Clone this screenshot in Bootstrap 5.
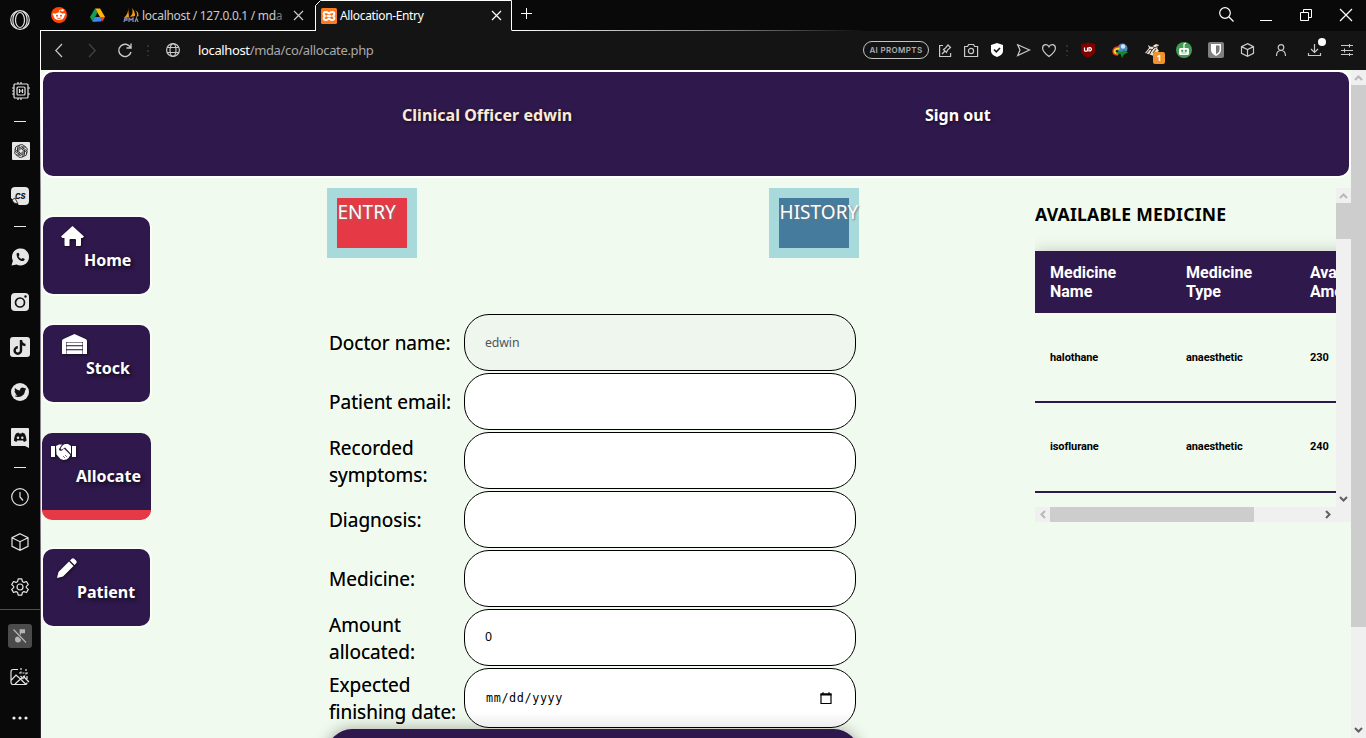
<!DOCTYPE html>
<html lang="en">
<head>
<meta charset="utf-8">
<title>Allocation-Entry</title>
<link rel="stylesheet" href="https://cdn.jsdelivr.net/npm/bootstrap@5.3.0/dist/css/bootstrap.min.css">
<style>
:root{--ink:#2f184b;--mint:#f1faee;--aqua:#a8dadc;--red:#e63946;--blue:#457b9d}
body{width:1366px;height:738px;overflow:hidden;background:#080808;font-family:"Noto Sans","Open Sans",sans-serif;color:#000}
svg{display:block;flex:none;overflow:visible}
.ln{fill:none;stroke:#c9c9c9;stroke-width:1.2}
/* launcher rail */
.rail{width:40px;background:#090909}
.slot{height:45px;display:flex;align-items:center;justify-content:center;flex:none}
.slot .ln{stroke:#e4e4e4}
.h10{height:11px}.h20{height:20px}.h30{height:30px}.h31{height:31px}.h40{height:40px}.h50{height:50px}.h52{height:52px}
.dash{width:12px;height:1px;background:#e8e8e8}
.rule{height:1px;background:#505050;flex:none}
.edge{width:1px;background:linear-gradient(#090909 0 30px,#fff 30px 100px,#8d8792 190px,#8d8792 520px,#2b2530 650px)}
.mute{width:24px;height:24px;background:#4b4b4b;border-radius:3px}
/* tabs */
.tabs{height:31px;background:#090909;font-size:12px;line-height:30px}
.tab-ico{width:38px;height:30px;padding-right:2px}
.rest{height:31px;border-bottom:1px solid #fff}
.fade-line{border-image:linear-gradient(90deg,#fff,#777 65%,#090909) 1;width:355px}
.tab-name{width:142px;white-space:nowrap;color:#c9c9c9;letter-spacing:-.3px;line-height:31px}
.tab-name i{font-style:normal;color:#777}
.tab-on{width:196px;height:31px;color:#fff;letter-spacing:-.35px;position:relative;line-height:31px}
.tab-on>.outline{position:absolute;left:0;top:0}
.tab-on>div{position:relative}
.bar{height:39px;padding-bottom:1px;background:#141414;color:#aaa;font-size:13px}
.bar b{font-weight:400;color:#fff}
.url{letter-spacing:-.36px;padding:2px 0 0 7px}
.w26{width:26px}.w32{width:32px}.w34{width:34px}.w40{width:40px}
.cell{display:flex;align-items:center;justify-content:center;flex:none}
.pill{width:66px;height:18px;border:1px solid #c4c4c4;border-radius:9px;font:600 8px/16px Inter,sans-serif;letter-spacing:.35px;color:#ababab;text-align:center;margin-right:3px}
.badge-n{position:absolute;left:17px;top:9px;width:12px;height:12px;border-radius:2px;background:#f0932b;color:#fff;font:700 9px/12px "Open Sans",sans-serif;text-align:center}
.dl-dot{position:absolute;left:20px;top:-6px;width:8px;height:8px;border-radius:50%;background:#fff}
/* document */
.doc{height:668px;background:var(--mint);overflow:hidden}
.sheet{width:1310px;padding:2px}
.top-nav{height:104px;width:1306px;border-radius:10px;background:var(--ink);box-shadow:0 0 0 2px #fff;color:#fff;font-weight:700;font-size:16px;padding-top:31px;text-shadow:1px 1px 3px #0008}
.who{margin-left:359px;width:523px;color:#faebd7;letter-spacing:.04px}
.side{width:107px;padding-top:41px}
.tile{height:77px;border-radius:10px;background:var(--ink);color:#fff;font-weight:700;font-size:16px;line-height:29px;padding-top:9px;margin-bottom:31px;box-shadow:0 0 0 2px #f9fdf8;text-shadow:2px 2px 4px #000a}
.tile svg{height:20px;filter:drop-shadow(1px 1px 1.5px #0008)}
.tile.now{height:87px;width:109px;margin:0 -1px 29px;padding-left:1px;border-bottom:10px solid var(--red);box-shadow:none}
.entry{width:532px;margin-left:177px;padding-top:12px}
.sq{width:90px;height:70px;border:10px solid var(--aqua);color:#fff;font-size:19px;line-height:28px;letter-spacing:.05px;padding-left:.5px;text-shadow:1px 1px 2px #777}
.rowf{height:59px;padding-left:2px}
.rowf label{width:135px;font-size:19px;line-height:27px;padding-top:2px;text-shadow:0 0 .6px #0009;letter-spacing:0;flex:none}
.fld{width:392px;height:57px;border:1px solid #000;border-radius:25px;background:#fff;font-size:12.3px;padding:0 20px;display:flex;align-items:center}
.fld.off{background:#eff6ee;color:#545454;letter-spacing:-.1px;padding-top:1px}
.dt{height:60px;background:linear-gradient(#fff 75%,#ececec)}
.mono{font:11.8px "DejaVu Sans Mono",monospace;letter-spacing:.6px;padding-left:1px}
.send{width:532px;height:57px;border-radius:25px;background:var(--ink);box-shadow:0 0 16px #0005}
.stock{width:316px;margin-left:176px;padding-top:12px}
.view{width:301px;height:319px;overflow:hidden;font-family:Roboto,sans-serif}
.view h1{font:700 17.6px/24px "Noto Sans",sans-serif;margin:14px 0 25px;white-space:nowrap;letter-spacing:.2px}
.med{width:420px}
.tr1{height:62px;background:var(--ink);color:#fff;font-weight:700;font-size:16px;line-height:19px;box-shadow:0 0 15px #0003;clip-path:inset(-20px 0 0 0);letter-spacing:0}
.tr2{height:90px;border-bottom:2px solid var(--ink);font-weight:700;font-size:11px;letter-spacing:-.1px;padding-top:1px}
.tr2.first{padding-top:3px}
.c1{width:136px;padding-left:15px}.c2{width:124px;padding-left:15px}.c3{width:120px;padding-left:15px}
.sb{width:15px;background:#f0f0f0}
.sb .thumb,.hs .thumb{background:#cdcdcd}
.btn15{width:15px;height:15px;flex:none}
.hs{height:15px;background:#f0f0f0}
.ar{fill:none;stroke:#606060;stroke-width:2}
.ar.dim{stroke:#b8b8b8}
</style>
</head>
<body class="d-flex m-0">
<aside class="rail d-flex flex-column">
 <div class="slot h40"><svg width="20" height="20" viewBox="0 0 20 20"><circle cx="10" cy="10" r="9.3" class="ln"/><ellipse cx="10" cy="10" rx="4.500" ry="7.500" class="ln"/><path class="ln" d="M7 1.500C1.500 5 1.500 15 7 18.500M13 1.500C18.500 5 18.500 15 13 18.500"/></svg></div>
 <div class="slot h31"></div>
 <div class="slot h40" style="padding-left:1px"><svg width="18" height="18" viewBox="0 0 18 18"><g class="ln"><rect x="2" y="2" width="14" height="14" rx="1"/><rect x="5" y="5" width="8" height="8" rx="1"/><path d="M7.500 7v4M10.500 7v4M7.500 9h3M6 0v2M9 0v2M6 16v2M9 16v2M0 6h2M0 9h2M0 12h2M16 6h2M16 12h2"/></g></svg></div>
 <div class="slot h20"><div class="dash"></div></div>
 <div class="slot h40" style="padding-left:1px"><svg width="18" height="18" viewBox="0 0 18 18"><rect width="18" height="18" rx="1" fill="#e6e6e6"/><g fill="none" stroke="#111" stroke-width=".75"><path id="petal" d="M6.900 9.500V5.200a2.700 2.700 0 0 1 4.800-1.700M6.900 6.200l3.300-1.900a2.700 2.700 0 0 1 3.700 1"/><use href="#petal" transform="rotate(60 9 9)"/><use href="#petal" transform="rotate(120 9 9)"/><use href="#petal" transform="rotate(180 9 9)"/><use href="#petal" transform="rotate(240 9 9)"/><use href="#petal" transform="rotate(300 9 9)"/></g></svg></div>
 <div class="slot h50"><svg width="18" height="18" viewBox="0 0 18 18"><path d="M4 0h10a4 4 0 0 1 4 4v10a4 4 0 0 1-4 4H8L0 11V4a4 4 0 0 1 4-4z" fill="#e6e6e6"/><path d="M1 13l3-2 3 6-4-1z" fill="#e6e6e6" stroke="#111" stroke-width=".8"/><text x="4" y="12" font-family="Inter" font-weight="800" font-style="italic" font-size="7.500" fill="#111">CS</text></svg></div>
 <div class="slot h10"><div class="dash"></div></div>
 <div class="slot h50"><svg width="18" height="18" viewBox="0 0 19 18"><path d="M.500 18L2 13A9 9 0 1 1 6 17z" fill="#e6e6e6"/><path d="M6 5l2-.5 1 2.500-1 1.200c.8 1.500 1.800 2.300 3 2.900l1.300-1.100 2.200 1.200c-.3 2-1.700 2.300-3 2C8.500 12.500 5.500 9.500 6 5z" fill="#111"/></svg></div>
 <div class="slot h40"><svg width="18" height="18" viewBox="0 0 18 18"><rect width="18" height="18" rx="4" fill="#e6e6e6"/><circle cx="9" cy="9.500" r="4.500" fill="none" stroke="#111" stroke-width="1.700"/><circle cx="14.500" cy="3.500" r="1.200" fill="#111"/></svg></div>
 <div class="slot h50"><svg width="20" height="20" viewBox="0 0 20 20"><rect width="20" height="20" rx="3" fill="#e6e6e6"/><path d="M11 3v10.500a3.200 3.200 0 1 1-3.200-3.200M11 3.500c.3 2.500 2 4.300 4.500 4.500" fill="none" stroke="#111" stroke-width="2.400"/></svg></div>
 <div class="slot h40"><svg width="18" height="18" viewBox="0 0 18 18"><circle cx="9" cy="9" r="9" fill="#e6e6e6"/><path d="M4 5c1.500 1.600 3 2.300 5 2.400C8.700 4.500 12 3.600 13.300 5.300l1.700-.5-.8 1.500 1-.1-1.200 1.300C14 12.500 9 15.500 3.500 13c1.400 0 2.200-.2 3-.9-1.300-.2-1.900-.8-2.200-1.700h1C4 9.900 3.500 9 3.500 8l1 .3C3.500 7.300 3.500 6 4 5z" fill="#111"/></svg></div>
 <div class="slot h50"><svg width="18" height="20" viewBox="0 0 18 20" style="margin-top:1px"><path d="M1 0h16a1 1 0 0 1 1 1v19l-4-2H1a1 1 0 0 1-1-1V1a1 1 0 0 1 1-1z" fill="#e6e6e6"/><path d="M5 5.500l2.500-1 .5 1h2.500l.5-1 2.500 1c1.500 2.500 2 5 2 7.200L13 14l-1-1.500H6L5.500 14 3 12.700C3 10.500 3.500 8 5 5.500z" fill="#111"/><circle cx="7" cy="9.800" r="1.200" fill="#e6e6e6"/><circle cx="11.300" cy="9.800" r="1.200" fill="#e6e6e6"/></svg></div>
 <div class="slot h10" style="height:10px"><div class="dash"></div></div>
 <div class="slot h50"><svg width="18" height="18" viewBox="0 0 18 18"><circle cx="9" cy="9" r="8.300" class="ln"/><path d="M9 4v5l3 3.500" class="ln"/></svg></div>
 <div class="slot h40"><svg width="18" height="18" viewBox="0 0 18 18"><path class="ln" d="M9 .7l8 4v8.600l-8 4-8-4V4.700zM1 4.700l8 4 8-4M9 8.700v8.600"/></svg></div>
 <div class="slot" style="margin-top:2px"><svg width="18" height="18" viewBox="0 0 18 18"><circle cx="9" cy="9" r="3" class="ln"/><path class="ln" stroke-linejoin="round" d="M7.200.8h3.600l.6 2.700 1.500.9 2.600-.9 1.800 3.100-2 1.800v1.200l2 1.800-1.800 3.100-2.600-.9-1.500.9-.6 2.700H7.200l-.6-2.700-1.500-.9-2.600.9L.7 11.400l2-1.800V8.400l-2-1.800 1.800-3.100 2.600.9 1.500-.9z"/></svg></div>
 <div class="rule"></div>
 <div class="slot h52"><div class="mute cell"><svg width="14" height="14" viewBox="0 0 14 14"><circle cx="5" cy="10.500" r="3" fill="#b5b5b5"/><path d="M7.300 10.500V1h4v2.500h-4" stroke="#b5b5b5" stroke-width="1.400" fill="#b5b5b5"/><path d="M1 1l12 12.500" stroke="#4b4b4b" stroke-width="3"/><path d="M.500 .5l12.500 13" stroke="#b5b5b5" stroke-width="1.200"/></svg></div></div>
 <div class="slot h30"><svg width="20" height="18" viewBox="0 0 20 18"><path class="ln" d="M8 1.500H3Q1 1.500 1 4v10q0 2.500 2 2.500h12q2 0 2-2M1.500 12L6 7l5 4.500 5 5M5 16l5-4.500 2-1.500M17 8v3M10.500 8l2.500 2.500 2-3M13 8l6 6"/><path class="ln" stroke-dasharray="2 1.500" d="M9 5h9M11 0v6M16 1v6"/></svg></div>
 <div class="slot h52"><svg width="16" height="4"><g fill="#eee"><circle cx="2" cy="2" r="1.600"/><circle cx="8" cy="2" r="1.600"/><circle cx="14" cy="2" r="1.600"/></g></svg></div>
</aside>
<div class="edge"></div>
<main class="d-flex flex-column flex-grow-1">
 <div class="tabs d-flex">
  <div class="rest d-flex" style="width:275px">
   <div class="cell tab-ico"><svg width="16" height="16" viewBox="0 0 16 16"><circle cx="8" cy="8" r="8" fill="#ff4500"/><ellipse cx="8" cy="9.300" rx="5.200" ry="3.700" fill="#fff"/><circle cx="3" cy="7.500" r="1.300" fill="#fff"/><circle cx="13" cy="7.500" r="1.300" fill="#fff"/><circle cx="11.500" cy="3.300" r="1.200" fill="#fff"/><path d="M8 6l.8-3 2.500.5" stroke="#fff" fill="none" stroke-width=".8"/><circle cx="6" cy="8.800" r="1" fill="#ff4500"/><circle cx="10" cy="8.800" r="1" fill="#ff4500"/><path d="M6 11q2 1.200 4 0" stroke="#ff4500" fill="none" stroke-width=".8"/></svg></div>
   <div class="cell tab-ico"><svg width="15" height="14" viewBox="0 0 15 14"><path d="M5 .500h5L15 9h-5z" fill="#ffba00"/><path d="M4.800 9H10l-2.800 4.500H2.500z" fill="#4285f4"/><path d="M5 9h7l-.5 4.500h-9z" fill="#4285f4"/><path d="M10 9h5l-2.500 4.500z" fill="#ea4335"/><path d="M0 9l2.500 4.500L5 9 7.500 4.500 5 .500z" fill="#0f9d58"/></svg></div>
   <div class="cell" style="width:25px;padding-left:3px"><svg width="16" height="16" viewBox="0 0 16 16"><path d="M5 0Q6 6 1 11l5-1zM9 1q2 5-2 9l5-1Q12 4 9 1zM12 3q3 3 1.500 7l2-1Q16 5 12 3z" fill="#f89c0e"/><path d="M1 15l1-4h2v2H2M6 15v-4l2 2 2-2v4M12 15l1.500-4L15 15" stroke="#8589b5" fill="none" stroke-width="1.300"/></svg></div>
   <div class="tab-name">localhost / 127.0.0.1 / md<i>a</i></div>
   <div class="cell" style="width:28px"><svg width="9" height="9"><path d="M0 0l9 9M9 0L0 9" class="ln"/></svg></div>
  </div>
  <div class="tab-on d-flex">
   <svg class="outline" width="196" height="31"><path d="M0 31V5.500L5.500.500h190V31z" fill="#141414"/><path d="M-.500 30.500V5.500L4.500.500h191V30.500" fill="none" stroke="#fff"/></svg>
   <div class="cell" style="width:24px;padding-left:1px"><svg width="16" height="16" viewBox="0 0 16 16"><rect width="16" height="16" rx="1.500" fill="#fb7a24"/><path d="M5 4c2 0 2 1.500 3 1.500S9 4 11 4c3 0 3 3 1 4 2 1 2 4-1 4-2 0-2-1.500-3-1.500S7 12 5 12c-3 0-3-3-1-4C2 7 2 4 5 4zM6 8h4" fill="none" stroke="#fff" stroke-width="1.900"/></svg></div>
   <div style="width:146px">Allocation-Entry</div>
   <div class="cell" style="width:20px"><svg width="9" height="9"><path d="M0 0l9 9M9 0L0 9" class="ln" style="stroke:#fff"/></svg></div>
  </div>
  <div class="rest fade-line d-flex"><div class="cell" style="width:28px;height:27px"><svg width="11" height="11"><path d="M5.500 0v11M0 5.500h11" stroke="#fff"/></svg></div></div>
  <div class="ms-auto d-flex">
   <div class="cell w40" style="padding-bottom:2px"><svg width="15" height="15"><circle cx="6" cy="6" r="5.300" class="ln" style="stroke:#fff"/><path d="M10 10l4.500 4.500" class="ln" style="stroke:#fff"/></svg></div>
   <div class="cell w40" style="padding-top:10px"><svg width="12" height="1"><path d="M0 .5h12" stroke="#fff"/></svg></div>
   <div class="cell w40" style="padding-bottom:1px"><svg width="12" height="12"><path d="M3.500 3.500v-3h8v8h-3M.500 3.500h8v8h-8z" fill="none" stroke="#fff"/></svg></div>
   <div class="cell w40" style="padding-bottom:1px"><svg width="12" height="12"><path d="M0 0l12 12M12 0L0 12" class="ln" style="stroke:#fff"/></svg></div>
  </div>
 </div>
 <div class="bar d-flex align-items-center">
  <div class="cell" style="width:35px"><svg width="7" height="13"><path class="ln" d="M7 0L.800 6.500 7 13"/></svg></div>
  <div class="cell" style="width:33px"><svg width="7" height="13"><path class="ln" style="stroke:#444" d="M0 0l6.200 6.500L0 13"/></svg></div>
  <div class="cell" style="width:32px"><svg width="14" height="14"><path class="ln" style="stroke-width:1.400" d="M12.500 4.500A6.200 6.200 0 1 0 13 9M13 .5v4.500H8.500"/></svg></div>
  <div class="cell" style="width:14px"><svg width="2" height="12"><path d="M1 1v11" stroke="#303030" stroke-width="2" stroke-dasharray="2 3"/></svg></div>
  <div class="cell" style="width:36px"><svg width="14" height="14" viewBox="0 0 14 14"><g class="ln"><circle cx="7" cy="7" r="6.400"/><ellipse cx="7" cy="7" rx="3" ry="6.400"/><path d="M1.200 4.500h11.600M1.200 9.500h11.600"/></g></svg></div>
  <div class="url"><b>localhost</b>/mda/co/allocate.php</div>
  <div class="ms-auto d-flex align-items-center" style="padding-right:2px">
   <div class="pill">AI PROMPTS</div>
   <div class="cell w26"><svg width="13" height="13"><path class="ln" d="M4 1.500H.600v11h11V9M3 10l3-3M4.500 5.500l3 3 1-2.500 3-2.500-2.500-2.500L6.500 4z"/></svg></div>
   <div class="cell w26"><svg width="14" height="13"><path class="ln" d="M.6 2.500h3l1-2h5l1 2h3v10H.600z"/><circle class="ln" cx="7" cy="7" r="2.600"/></svg></div>
   <div class="cell w26"><svg width="12" height="14"><path fill="#fff" d="M6 0l6 2v6c0 3-3 5-6 6-3-1-6-3-6-6V2z"/><path d="M3 6.500l2.300 2.300L9 5" fill="none" stroke="#141414" stroke-width="1.600"/></svg></div>
   <div class="cell w26"><svg width="13" height="12"><path class="ln" d="M.700.800L12.500 6 .700 11.500 3 6z"/></svg></div>
   <div class="cell w26"><svg width="14" height="13"><path class="ln" d="M7 12.500C3 9.500.600 7 .600 4.200.600 0 5.500-.500 7 2.800 8.500-.500 13.400 0 13.400 4.200 13.400 7 11 9.500 7 12.500z"/></svg></div>
   <div class="cell" style="width:10px"><svg width="2" height="12"><path d="M1 1v11" stroke="#303030" stroke-width="2" stroke-dasharray="2 3"/></svg></div>
   <div class="cell w32"><svg width="14" height="16"><path fill="#800000" d="M7 0l1 1 6 1v6c0 4-3 6-7 8-4-2-7-4-7-8V2l6-1z"/><path d="M3.500 5.500v3.200q1.500 1 3 0V5.500M8 5.500v3.500h1.200q2.500-1.700 0-3.500z" fill="none" stroke="#fff" stroke-width="1.200"/></svg></div>
   <div class="cell w32"><svg width="16" height="15"><circle cx="10.500" cy="5.500" r="5" fill="#4d88c4"/><circle cx="11" cy="3.500" r="2.200" fill="#d5e6f4"/><path d="M7 4Q1 4 1 8.500 1 12 6 12" fill="none" stroke="#e8352a" stroke-width="1.500"/><path d="M7.500 5.500q-5 0-5 3 0 2 4 2" fill="none" stroke="#f5dd26" stroke-width="2"/><path d="M5 8.500h6V6.500l5 3-4 2-2 3.500-1.500-4L4 10.500z" fill="#128b24"/></svg></div>
   <div class="cell w32 position-relative"><svg width="16" height="14"><path d="M1 10L5 5 4 2l3 2 5-3 3 1-2 3 2 3-3 2-2 3-3-1z" fill="#e9ddd0"/><path d="M2 11l4-5 2 1-3 5M8 3l3 2 3-2M7 8l3-3M9 10l3-4" fill="none" stroke="#3a302a" stroke-width="1"/></svg><div class="badge-n">1</div></div>
   <div class="cell w32"><svg width="16" height="16"><circle cx="8" cy="8" r="8" fill="#459a55"/><rect x="3" y="6" width="10" height="7" rx="1.500" fill="#fff"/><path d="M8 6V2l2-1" stroke="#fff" fill="none" stroke-width="1.200"/><path d="M5.500 8h1.500v1.500H5.500zM9 8h1.500v1.500H9zM5.500 11h5" fill="#459a55" stroke="#459a55" stroke-width=".6"/></svg></div>
   <div class="cell w32"><svg width="16" height="16"><rect width="16" height="16" rx="2" fill="#808080"/><path fill="#fff" d="M3 2h10v6c0 3-3 5-5 6-2-1-5-3-5-6z"/><path fill="#777" d="M8 3.500h3.500V8c0 2-2 3.500-3.500 4.300z"/></svg></div>
   <div class="cell" style="width:30px"><svg width="13" height="14" viewBox="0 0 13 14"><path class="ln" d="M6.500.600l6 3v6.800l-6 3-6-3V3.600zM.500 3.600l6 3 6-3M6.500 6.600v6.800"/></svg></div>
   <div class="cell" style="width:37px"><svg width="10" height="12"><circle class="ln" cx="5" cy="3.500" r="2.800"/><path class="ln" d="M.500 12C.500 9 2 6.500 5 6.500s4.500 2.500 4.500 5.500"/></svg></div>
   <div class="cell position-relative" style="width:30px"><svg width="13" height="12"><path class="ln" d="M6.500 0v8M3 5l3.500 3.500L10 5M.500 9v2.500h12V9"/></svg><div class="dl-dot" style="left:19px"></div></div>
   <div class="cell" style="width:35px"><svg width="12" height="12"><path class="ln" style="stroke-width:1" d="M0 1.500h12M0 6.500h12M0 10.500h12M8.500 0v3.500M3.500 4.500v4M8.500 9v3"/></svg></div>
  </div>
 </div>
 <div class="doc d-flex">
  <div class="sheet">
   <header class="top-nav d-flex"><div class="who">Clinical Officer edwin</div><div>Sign out</div></header>
   <div class="d-flex">
    <nav class="side">
     <div class="tile"><svg width="23" viewBox="0 0 23 20" style="margin-left:18px" fill="#fff"><path d="M11.500 0L23 10.500 21.500 12H20v7q0 1-1 1h-4v-6q0-1-1-1H9.500q-1 0-1 1v6h-4q-1 0-1-1v-7H1.500L0 10.500z"/></svg><div style="margin-left:41px">Home</div></div>
     <div class="tile"><svg width="25" viewBox="0 0 25 20" style="margin-left:19px"><path fill="#fff" d="M0 20V7q0-1.500 1.500-2L12.500 0l11 5Q25 5.500 25 7v13h-4V8H4v12z"/><path fill="#fff" d="M4.500 8.500h16v2.800h-16zM4.500 12.300h16v3h-16zM4.500 16.300h16V20h-16z"/></svg><div style="margin-left:43px">Stock</div></div>
     <div class="tile now"><svg width="25" viewBox="0 0 25 20" style="margin-left:8px"><path fill="#fff" d="M0 4h4v11H0zM21 4h4v11h-4zM5 4l3-1.500 3 0L8 7q0 2.500 3 1.500l2-2 6.500 6.500-2 3-2 1.500-3 .5-3-1-4-4.500zM12 3l2-1 3 0 3 2v8l-6-6.500-3 2q-2 0-1-2z"/><path d="M12 14l2 2M14 13l2 2" stroke="#2f184b" stroke-width=".6"/></svg><div style="margin-left:33px">Allocate</div></div>
     <div class="tile"><svg width="20" viewBox="0 0 20 20" style="margin-left:14px" fill="#fff"><path d="M0 20l1.500-6L12 3.500 16.500 8 6 18.500zM13 2.500l1.500-1.500q1.500-1.500 3 0l1.500 1.500q1.500 1.500 0 3L17.500 7z"/></svg><div style="margin-left:34px">Patient</div></div>
    </nav>
    <section class="entry">
     <div class="d-flex justify-content-between" style="margin-bottom:55px"><div class="sq" style="background:var(--red)">ENTRY</div><div class="sq" style="background:var(--blue)">HISTORY</div></div>
     <div class="rowf d-flex align-items-center"><label>Doctor name:</label><div class="fld off">edwin</div></div>
     <div class="rowf d-flex align-items-center"><label>Patient email:</label><div class="fld"></div></div>
     <div class="rowf d-flex align-items-center"><label>Recorded symptoms:</label><div class="fld"></div></div>
     <div class="rowf d-flex align-items-center"><label>Diagnosis:</label><div class="fld"></div></div>
     <div class="rowf d-flex align-items-center"><label>Medicine:</label><div class="fld"></div></div>
     <div class="rowf d-flex align-items-center"><label>Amount allocated:</label><div class="fld">0</div></div>
     <div class="rowf d-flex align-items-center" style="height:62px"><label>Expected finishing date:</label><div class="fld dt justify-content-between"><span class="mono">mm/dd/yyyy</span><svg width="12" height="12" style="margin-right:3px"><path d="M1 2h10v9.500H1z" fill="none" stroke="#000" stroke-width="1.200"/><path d="M.500 1.500h11V3.500H.500zM2.500 0h1v2h-1zM8.500 0h1v2h-1z"/></svg></div></div>
     <div class="send"></div>
    </section>
    <section class="stock">
     <div class="d-flex">
      <div class="view"><h1>AVAILABLE MEDICINE</h1>
       <div class="med">
        <div class="tr1 d-flex align-items-center"><div class="c1">Medicine<br>Name</div><div class="c2">Medicine<br>Type</div><div class="c3">Available<br>Amount</div></div>
        <div class="tr2 first d-flex align-items-center"><div class="c1">halothane</div><div class="c2">anaesthetic</div><div class="c3">230</div></div>
        <div class="tr2 d-flex align-items-center"><div class="c1">isoflurane</div><div class="c2">anaesthetic</div><div class="c3">240</div></div>
       </div>
      </div>
      <div class="sb d-flex flex-column"><div class="btn15 cell"><svg width="7" height="5"><path class="ar dim" d="M0 5l3.500-3.500L7 5"/></svg></div><div class="thumb" style="height:36px"></div><div class="btn15 cell mt-auto"><svg width="7" height="5"><path class="ar" d="M0 0l3.500 3.500L7 0"/></svg></div></div>
     </div>
     <div class="hs d-flex"><div class="btn15 cell"><svg width="5" height="7"><path class="ar dim" d="M5 0L1.500 3.500 5 7"/></svg></div><div class="thumb" style="width:204px"></div><div class="btn15 cell ms-auto" style="margin-right:15px"><svg width="5" height="7"><path class="ar" d="M0 0l3.500 3.500L0 7"/></svg></div></div>
    </section>
   </div>
  </div>
  <div class="sb d-flex flex-column"><div class="btn15 cell"><svg width="7" height="5"><path class="ar dim" d="M0 5l3.500-3.500L7 5"/></svg></div><div class="thumb" style="height:542px"></div><div class="btn15 cell mt-auto"><svg width="7" height="5"><path class="ar" d="M0 0l3.500 3.500L7 0"/></svg></div></div>
 </div>
</main>
<script src="https://cdn.jsdelivr.net/npm/bootstrap@5.3.0/dist/js/bootstrap.bundle.min.js"></script>
</body>
</html>
